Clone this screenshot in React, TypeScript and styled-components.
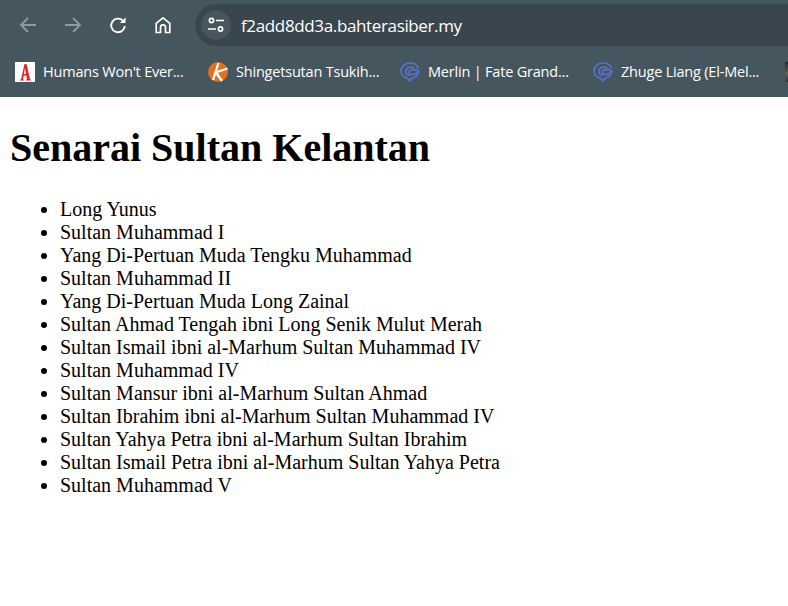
import React from "react";
import styled, { createGlobalStyle } from "styled-components";

const Global = createGlobalStyle`
  html, body { margin: 0; padding: 0; background: #fff; overflow: hidden; }
`;
const Chrome = styled.header`
  height: 97px;
  background: #46565f;
  overflow: hidden;
  position: relative;
`;
const Toolbar = styled.div`
  height: 50px;
  display: flex;
  align-items: flex-start;
  padding-top: 4px;
  box-sizing: border-box;
`;
const NavButtons = styled.div`
  display: flex;
  align-items: center;
  height: 42px;
  gap: 9px;
  padding-left: 10px;
  width: 195px;
  box-sizing: border-box;
  flex: none;
`;
const NavIcon = styled.span<{ $dim?: boolean }>`
  width: 36px;
  height: 36px;
  display: flex;
  align-items: center;
  justify-content: center;
  color: ${(p) => (p.$dim ? "#8f9aa0" : "#ffffff")};
`;
const Omnibox = styled.div`
  flex: 1;
  height: 42px;
  background: #3a464d;
  border-radius: 21px 0 0 21px;
  display: flex;
  align-items: center;
  padding-left: 6px;
  gap: 10px;
`;
const SiteChip = styled.span`
  width: 30px;
  height: 30px;
  border-radius: 50%;
  background: #46565f;
  display: flex;
  align-items: center;
  justify-content: center;
  color: #fff;
`;
const Url = styled.span`
  font: 17px "Open Sans", sans-serif;
  letter-spacing: -0.36px;
  padding-top: 1px;
  color: #fff;
`;
const Bookmarks = styled.nav`
  height: 47px;
  display: flex;
  align-items: center;
  padding-left: 15px;
  padding-bottom: 4px;
  box-sizing: border-box;
  white-space: nowrap;
`;
const Bookmark = styled.span<{ $w: number }>`
  width: ${(p) => p.$w}px;
  flex: none;
  display: flex;
  align-items: center;
  gap: 8px;
  font: 14.5px "Open Sans", sans-serif;
  letter-spacing: -0.2px;
  color: #fff;
`;
const Favicon = styled.svg`
  width: 20px;
  height: 20px;
  flex: none;
`;
const ClippedFavicon = styled.span`
  width: 20px;
  height: 20px;
  flex: none;
  background: linear-gradient(180deg, #2c2c30, #5b6258 60%, #34343c);
`;
const Page = styled.main`
  padding: 0 10px;
  color: #000;
  font-family: "Liberation Serif", serif;
`;
const Title = styled.h1`
  font-size: 40px;
  line-height: 46px;
  font-weight: 700;
  margin: 28px 0 27px;
`;
const List = styled.ul`
  margin: 0;
  padding-left: 50px;
  font-size: 20px;
  line-height: 23px;
`;

const Chat = () => (
  <Favicon viewBox="0 0 20 20" fill="none" stroke="#5a70d0" strokeWidth="1.7" strokeLinecap="round" strokeLinejoin="round">
    <path d="M18.300 5.800 C16.900 2.900 14 1 10.200 1 C5 1 1 4.400 1 9 C1 12.700 3.800 15.500 7.300 16.200 L9.800 18.900 L12.300 16.200 C14.700 15.700 16.700 14.300 17.800 12.400" />
    <path d="M13.800 6 C12.900 5.300 11.800 5 10.800 5 C7.900 5 5.700 7 5.700 9.500 C5.700 11.400 7 13 9 13.300" />
    <path d="M9 10.300 C9 8.700 10.500 7.700 12.500 7.700 C15.500 7.700 18 8.600 19 9.600 C18 11 15.500 12.500 12.500 12.500 C10.500 12.500 9 11.800 9 10.300 Z" />
  </Favicon>
);

const names = [
  "Long Yunus",
  "Sultan Muhammad I",
  "Yang Di-Pertuan Muda Tengku Muhammad",
  "Sultan Muhammad II",
  "Yang Di-Pertuan Muda Long Zainal",
  "Sultan Ahmad Tengah ibni Long Senik Mulut Merah",
  "Sultan Ismail ibni al-Marhum Sultan Muhammad IV",
  "Sultan Muhammad IV",
  "Sultan Mansur ibni al-Marhum Sultan Ahmad",
  "Sultan Ibrahim ibni al-Marhum Sultan Muhammad IV",
  "Sultan Yahya Petra ibni al-Marhum Sultan Ibrahim",
  "Sultan Ismail Petra ibni al-Marhum Sultan Yahya Petra",
  "Sultan Muhammad V",
];

export default function App() {
  return (
    <>
      <Global />
      <Chrome>
        <Toolbar>
          <NavButtons>
            <NavIcon $dim>
              <svg width="20" height="20" viewBox="0 0 20 20" fill="none" stroke="currentColor" strokeWidth="1.8">
                <path d="M18 10H3M10 3l-7 7 7 7" />
              </svg>
            </NavIcon>
            <NavIcon $dim>
              <svg width="20" height="20" viewBox="0 0 20 20" fill="none" stroke="currentColor" strokeWidth="1.8">
                <path d="M2 10h15M10 3l7 7-7 7" />
              </svg>
            </NavIcon>
            <NavIcon>
              <svg width="20" height="20" viewBox="0 0 20 20" fill="none" stroke="currentColor" strokeWidth="1.9">
                <path d="M16.800 11a6.800 6.800 0 1 1-1.900-5.300L16.500 7.300" />
                <path d="M17.500 2.500v5.600h-5.600" fill="currentColor" stroke="none" />
              </svg>
            </NavIcon>
            <NavIcon>
              <svg width="20" height="20" viewBox="0 0 20 20" fill="none" stroke="currentColor" strokeWidth="1.7" strokeLinejoin="round">
                <path d="M3.200 8.300 10 2.800l6.800 5.500V17.500h-4.300v-5.200a2.500 2.500 0 0 0-5 0v5.200H3.200z" />
              </svg>
            </NavIcon>
          </NavButtons>
          <Omnibox>
            <SiteChip>
              <svg width="20" height="20" viewBox="0 0 20 20" fill="none" stroke="currentColor" strokeWidth="1.7">
                <circle cx="5.500" cy="5.500" r="2.100" />
                <path d="M10 5.500h8M2 14h8" />
                <circle cx="14.500" cy="14" r="2.100" />
              </svg>
            </SiteChip>
            <Url>f2add8dd3a.bahterasiber.my</Url>
          </Omnibox>
        </Toolbar>
        <Bookmarks>
          <Bookmark $w={193}>
            <Favicon viewBox="0 0 20 20">
              <rect width="20" height="20" fill="#fff" />
              <path d="M5 18.500h4v-1H8l.7-4h2.600l.7 4h-1v1h5v-1h-1L11.500 2H9.500L6 17.500H5zm3.900-6.500L10 6l1.100 6z" fill="#e5202b" />
            </Favicon>
            Humans Won't Ever...
          </Bookmark>
          <Bookmark $w={192}>
            <Favicon viewBox="0 0 20 20">
              <circle cx="10" cy="10" r="10" fill="#e2701f" />
              <path d="M5 18 L10.500 1 M7.500 10.500 L19.500 6.500 M8 10.500 L14 19" stroke="#fff" strokeWidth="2.300" fill="none" />
            </Favicon>
            Shingetsutan Tsukih...
          </Bookmark>
          <Bookmark $w={193}>
            <Chat />
            Merlin | Fate Grand...
          </Bookmark>
          <Bookmark $w={192}>
            <Chat />
            Zhuge Liang (El-Mel...
          </Bookmark>
          <ClippedFavicon />
        </Bookmarks>
      </Chrome>
      <Page>
        <Title>Senarai Sultan Kelantan</Title>
        <List>
          {names.map((n) => (
            <li key={n}>{n}</li>
          ))}
        </List>
      </Page>
    </>
  );
}
